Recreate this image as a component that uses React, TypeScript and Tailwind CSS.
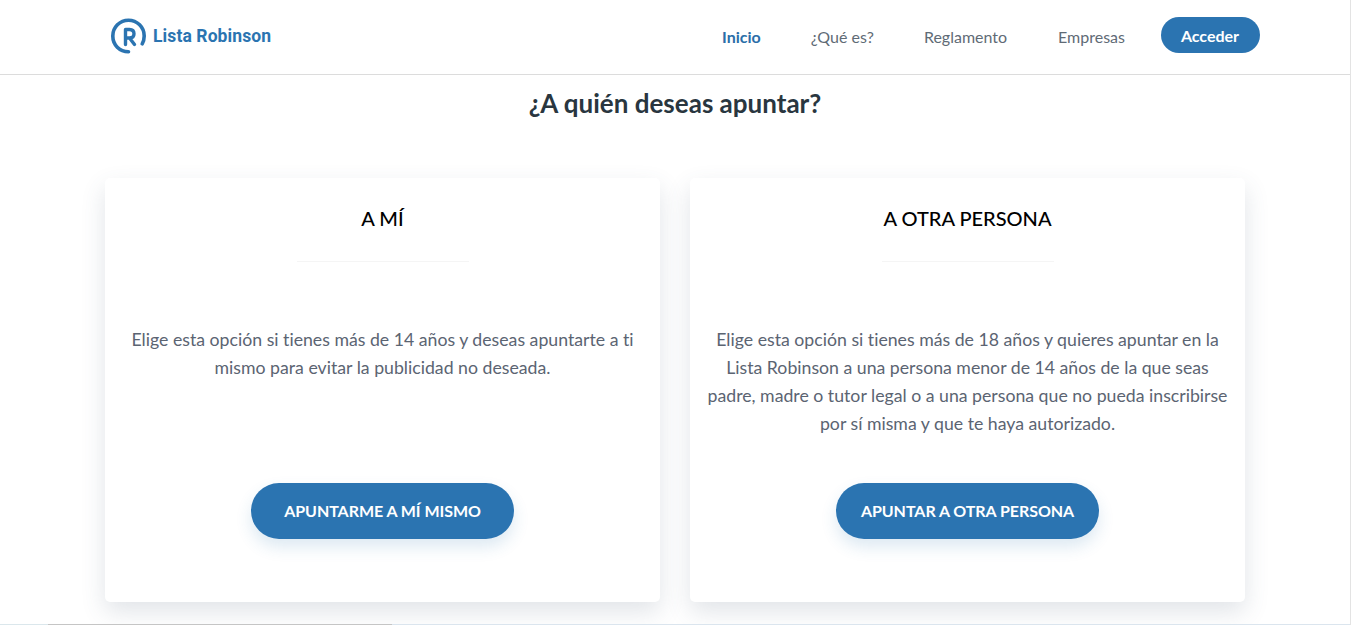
const font = "[font-family:Lato,'Liberation_Sans',sans-serif]";

function Logo() {
  return (
    <div className="flex items-center gap-[5px]">
      <svg width="37" height="37" viewBox="0 0 37 37" fill="none">
        <path d="M18.5 34.8C9.5 34.8 2.8 27.8 2.8 19C2.8 10.3 9.8 3.2 18.5 3.2C27.2 3.2 34.2 10.3 34.2 19C34.2 22 33.5 24.5 32.2 26.8" stroke="#2b74b1" strokeWidth="3.6" strokeLinecap="round" />
        <path d="M15.5 27.5V12.5H19.5C22.5 12.5 24 14.3 24 16.8C24 19.4 22.3 21 19.5 21H15.5M19.5 21L24.5 27.5" stroke="#2b74b1" strokeWidth="3.4" strokeLinecap="round" strokeLinejoin="round" />
      </svg>
      <span className="pt-[2px] pl-[1px] text-[17.5px] font-bold text-[#2b74b1] tracking-[0.1px] [font-family:Roboto,sans-serif]">Lista Robinson</span>
    </div>
  );
}

function Header() {
  return (
    <header className="h-[75px] border-b border-[#dcdcdc] flex items-start justify-between pl-[110px] pr-[90px] bg-white">
      <div className="pt-[17px]"><Logo /></div>
      <nav className="flex items-start text-[16px] leading-[24px] text-[#5f6b76]">
        <a className="mt-[25px] font-bold text-[#2b6ea8]">Inicio</a>
        <a className="mt-[25px] ml-[50px]">¿Qué es?</a>
        <a className="mt-[25px] ml-[50px]">Reglamento</a>
        <a className="mt-[25px] ml-[51px]">Empresas</a>
        <a className="mt-[17px] ml-[36px] w-[99px] h-[36px] pt-px pr-px rounded-full bg-[#2b74b1] text-white font-bold flex items-center justify-center">Acceder</a>
      </nav>
    </header>
  );
}

function Card({ title, text, cta }: { title: string; text: string[]; cta: string }) {
  return (
    <div className="w-[555px] h-[424px] bg-white rounded-[5px] shadow-[0_10px_25px_rgba(70,90,110,0.16)] flex flex-col items-center">
      <h2 className="mt-[26px] text-[20px] leading-[28px] font-medium text-black">{title}</h2>
      <div className="mt-[29px] w-[172px] h-px bg-[#f5f5f5]" />
      <div className="mt-[64px] h-[157px] text-[17.7px] leading-[28px] text-[#5b6472] text-center whitespace-nowrap [font-variant-ligatures:none]">
        {text.map((line) => <p key={line}>{line}</p>)}
      </div>
      <button className="w-[263px] h-[56px] rounded-full bg-[#2b74b1] text-white text-[16px] tracking-[-0.05px] font-bold shadow-[0_8px_16px_rgba(43,116,177,0.16)]">{cta}</button>
    </div>
  );
}

export default function App() {
  return (
    <div className={`${font} relative h-[625px] overflow-hidden bg-white border-r border-[#e3e3e3]`}>
      <Header />
      <h1 className="mt-[11px] text-center text-[26px] leading-[34px] font-bold text-[#29363f]">¿A quién deseas apuntar?</h1>
      <main className="mt-[58px] flex justify-center gap-[30px]">
        <Card
          title="A MÍ"
          text={["Elige esta opción si tienes más de 14 años y deseas apuntarte a ti", "mismo para evitar la publicidad no deseada."]}
          cta="APUNTARME A MÍ MISMO"
        />
        <Card
          title="A OTRA PERSONA"
          text={[
            "Elige esta opción si tienes más de 18 años y quieres apuntar en la",
            "Lista Robinson a una persona menor de 14 años de la que seas",
            "padre, madre o tutor legal o a una persona que no pueda inscribirse",
            "por sí misma y que te haya autorizado.",
          ]}
          cta="APUNTAR A OTRA PERSONA"
        />
      </main>
      <div className="absolute bottom-0 left-0 right-0 h-px flex">
        <div className="w-[48px] bg-[#dbe7ec]" />
        <div className="w-[344px] bg-[#c5c5c5]" />
        <div className="flex-1 bg-[#dbe5ee]" />
      </div>
    </div>
  );
}
